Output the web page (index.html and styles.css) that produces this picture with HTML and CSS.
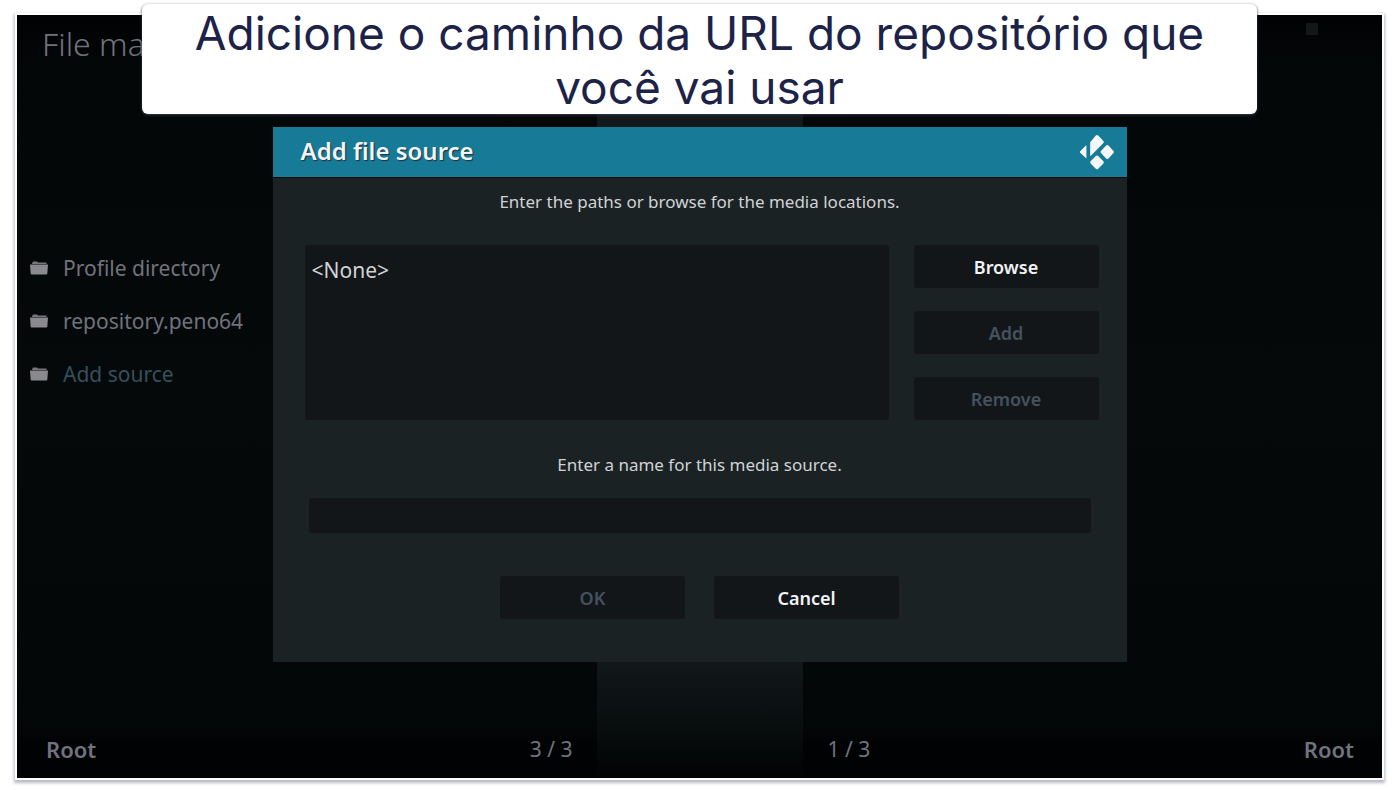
FILE: index.html
```html
<!DOCTYPE html>
<html lang="pt">
<head>
  <meta charset="UTF-8" />
  <meta name="viewport" content="width=device-width, initial-scale=1.0" />
  <title>Add file source</title>
  <link rel="stylesheet" href="styles.css">
</head>
<body>
  <div class="screen">
    <main class="panes">
      <section class="pane">
        <h1 class="pane-title">File ma</h1>
        <ul class="file-list">
          <li>
            <svg class="folder" viewBox="0 0 18 14"><path d="M2 2.5 3 .5h4l1 1h8.5v1.5H2z" fill="#77777b"/><path d="M0 3.5h18l-.7 9.2a1 1 0 0 1-1 .8H1.7a1 1 0 0 1-1-.8z" fill="#8a8a8e"/></svg>
            <span>Profile directory</span>
          </li>
          <li>
            <svg class="folder" viewBox="0 0 18 14"><path d="M2 2.5 3 .5h4l1 1h8.5v1.5H2z" fill="#77777b"/><path d="M0 3.5h18l-.7 9.2a1 1 0 0 1-1 .8H1.7a1 1 0 0 1-1-.8z" fill="#8a8a8e"/></svg>
            <span>repository.peno64</span>
          </li>
          <li class="selected">
            <svg class="folder" viewBox="0 0 18 14"><path d="M2 2.5 3 .5h4l1 1h8.5v1.5H2z" fill="#77777b"/><path d="M0 3.5h18l-.7 9.2a1 1 0 0 1-1 .8H1.7a1 1 0 0 1-1-.8z" fill="#8a8a8e"/></svg>
            <span>Add source</span>
          </li>
        </ul>
        <footer class="pane-footer">
          <strong>Root</strong>
          <span>3 / 3</span>
        </footer>
      </section>
      <div class="divider"></div>
      <section class="pane pane-right">
        <span class="indicator"></span>
        <footer class="pane-footer">
          <span>1 / 3</span>
          <strong>Root</strong>
        </footer>
      </section>
    </main>

    <div class="overlay">
      <form class="dialog">
        <header class="dialog-header">
          <h2>Add file source</h2>
          <svg class="logo" viewBox="0 0 36 36" fill="#f4f8fa">
            <path d="M7.4 12v12.400L1.200 18.800q-.8-.8 0-1.600L6.600 11.700q.8-.6.8.3z"/>
            <path d="M11.200 21.300V8.200L16.800 1.500q1.200-1.200 2.400 0l5.200 5.400q1 1.100 0 2.200L11.900 21.800q-.7.500-.7-.5z"/>
            <path d="m29.500 11.600 5 5.300q1 1.100 0 2.200l-5 5.300q-1.200 1.200-2.400 0L22 19.100q-1-1.100 0-2.200l5.100-5.300q1.200-1.200 2.400 0z"/>
            <path d="m19.200 22 5.200 5.200q1 1.100 0 2.200l-5.200 5.300q-1.200 1.100-2.400 0l-5.200-5.300q-1-1.100 0-2.200L16.800 22q1.200-1.200 2.400 0z"/>
          </svg>
        </header>
        <div class="dialog-body">
          <p class="hint">Enter the paths or browse for the media locations.</p>
          <div class="paths">
            <ul class="path-list">
              <li>&lt;None&gt;</li>
            </ul>
            <div class="path-actions">
              <button type="button" class="btn">Browse</button>
              <button type="button" class="btn" disabled>Add</button>
              <button type="button" class="btn" disabled>Remove</button>
            </div>
          </div>
          <label class="hint" for="sourceName">Enter a name for this media source.</label>
          <input class="name-input" id="sourceName" type="text" autocomplete="off">
          <div class="dialog-actions">
            <button type="submit" class="btn" disabled>OK</button>
            <button type="button" class="btn">Cancel</button>
          </div>
        </div>
      </form>
    </div>
  </div>

  <div class="caption">
    <p>Adicione o caminho da URL do repositório que você vai usar</p>
  </div>
</body>
</html>
```

FILE: styles.css
```css
* {
  box-sizing: border-box;
}
body {
  margin: 0;
  padding: 15px 18px 12px 17px;
  min-height: 100vh;
  display: flex;
  background: #fff;
  font-family: "Noto Sans", "Open Sans", sans-serif;
  font-size: 22px;
  line-height: 30px;
  color: #70737d;
}
h1, h2, p, ul {
  margin: 0;
  padding: 0;
}
ul {
  list-style: none;
}
.screen {
  position: relative;
  flex: 1;
  display: flex;
  background: linear-gradient(#010203 0, #040708 60px, #050909 50%, #040708 700px, #010203 730px);
  border: 1px solid #000;
  box-shadow: 0 0 0 2px #fff, 0 2px 3px 3px #b8b8c4;
}
.panes {
  flex: 1;
  display: grid;
  grid-template-columns: 1fr 206px 1fr;
}
.pane {
  display: flex;
  flex-direction: column;
}
.pane-title {
  padding: 5px 24px 0;
  font-size: 32px;
  line-height: 46px;
  font-weight: 300;
}
.file-list {
  margin-top: 186px;
  padding: 0 12px;
}
.file-list li {
  display: flex;
  align-items: center;
  gap: 15px;
  padding-bottom: 23px;
  font-size: 21px;
}
.file-list .selected {
  color: #34505f;
}
.folder {
  width: 18px;
  height: 14px;
}
.pane-footer {
  margin-top: auto;
  padding: 0 24px 13px 28px;
  display: flex;
  justify-content: space-between;
}
.pane-footer strong {
  font-weight: 600;
}
.pane-footer span {
  font-size: 21px;
}
.divider {
  background: linear-gradient(#12191b 0, #12191b 84%, #070b0c 95%, #010203);
}
.pane-right .indicator {
  align-self: flex-end;
  width: 12px;
  height: 12px;
  margin: 7px 63px 0 0;
  background: #141718;
}
.pane-right .pane-footer {
  padding: 0 27px 13px 25px;
}

.overlay {
  position: absolute;
  inset: 0;
  padding-top: 111px;
  display: flex;
  justify-content: center;
  align-items: flex-start;
}
.dialog {
  width: 854px;
  max-width: 100%;
  background: #1b2224;
}
.dialog-header {
  display: flex;
  align-items: center;
  justify-content: space-between;
  padding: 7px 12px 7px 28px;
  background: #177a96;
  border-bottom: 1px solid #05090a;
}
.dialog-header h2 {
  font-size: 24px;
  line-height: 32px;
  padding-bottom: 2px;
  font-weight: 600;
  color: #f1f5f7;
  text-shadow: 1px 1px 1px #20303c;
}
.logo {
  width: 36px;
  height: 36px;
}
.dialog-body {
  display: flex;
  flex-direction: column;
  padding: 9px 28px 43px;
}
.hint {
  font-size: 17px;
  text-align: center;
  color: #d0d2d6;
}
.paths {
  display: flex;
  gap: 25px;
  margin: 28px 0 30px 4px;
}
.path-list {
  flex: 1;
  padding: 10px 7px;
  background: #121618;
  border-radius: 3px;
  font-size: 21px;
  color: #d0d2d6;
}
.path-actions {
  display: flex;
  flex-direction: column;
  gap: 23px;
}
.btn {
  width: 185px;
  height: 43px;
  padding: 0;
  border: 0;
  border-radius: 3px;
  background: #121618;
  font: 600 18px/30px "Noto Sans", "Open Sans", sans-serif;
  color: #f1f3f5;
}
.btn:disabled {
  color: #465160;
}
.name-input {
  height: 35px;
  margin: 18px 8px 43px;
  padding: 0 8px;
  border: 0;
  border-radius: 3px;
  background: #121618;
  font: inherit;
  color: #d0d2d6;
}
.dialog-actions {
  display: flex;
  justify-content: center;
  gap: 29px;
}

.caption {
  position: absolute;
  top: 4px;
  left: 142px;
  right: 143px;
  padding: 2px 24px 0;
  background: #fff;
  border-radius: 6px;
  box-shadow: 0 1px 3px #34384c;
  font-family: Inter, Lato, sans-serif;
  font-size: 46px;
  line-height: 54px;
  text-align: center;
  color: #1d2347;
}
```
